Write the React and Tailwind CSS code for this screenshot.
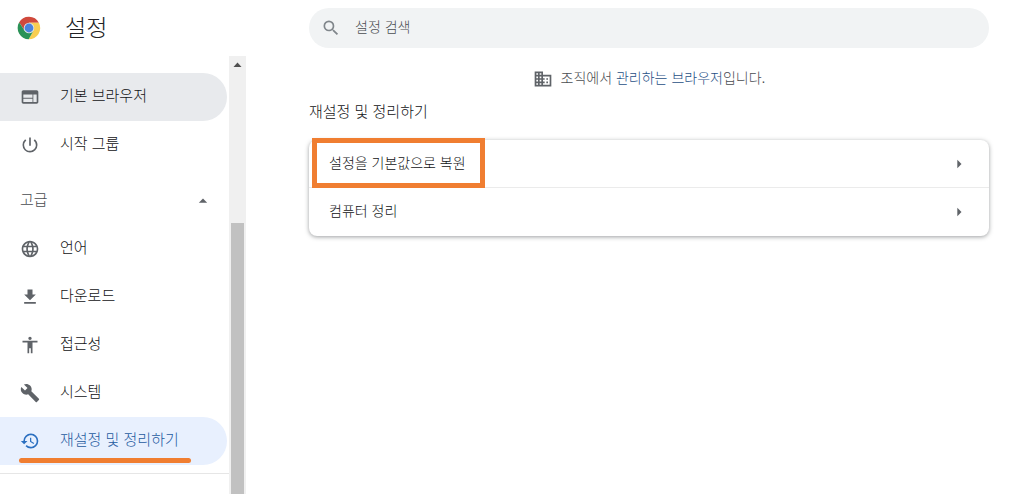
import React from "react";
import {
  MdWeb,
  MdPowerSettingsNew,
  MdLanguage,
  MdGetApp,
  MdAccessibility,
  MdBuild,
  MdRestore,
  MdSearch,
  MdDomain,
  MdArrowRight,
  MdArrowDropUp,
} from "react-icons/md";

const basicItems = [
  { label: "기본 브라우저", icon: MdWeb, state: "hover" },
  { label: "시작 그룹", icon: MdPowerSettingsNew },
];

const advancedItems = [
  { label: "언어", icon: MdLanguage },
  { label: "다운로드", icon: MdGetApp },
  { label: "접근성", icon: MdAccessibility },
  { label: "시스템", icon: MdBuild },
  { label: "재설정 및 정리하기", icon: MdRestore, state: "selected" },
];

const stateStyles = {
  hover: "bg-[#e8eaed] text-[#111214]",
  selected: "bg-[#e8f0fe] text-[#1f5a9e]",
  idle: "text-[#111214]",
};

function ChromeLogo() {
  return (
    <svg viewBox="0 0 48 48" className="size-6 shrink-0" aria-hidden="true">
      <path fill="#d0493c" d="M24 24 4.1 12.9A22.5 22.5 0 0 1 43.8 13.5H24Z" />
      <path fill="#d0493c" d="M4.3 12.7 14.9 29.2 24 13.5Z" />
      <path fill="#f8ce52" d="M43.8 13.5A22.5 22.5 0 0 1 23.4 46.5L33.1 29.2 24 13.5Z" />
      <path fill="#2a9257" d="M4.3 12.7A22.5 22.5 0 0 0 23.4 46.5L33.1 29.2 24 33 14.9 29.2Z" />
      <circle cx="24" cy="24" r="10.5" fill="#e3e6e4" />
      <circle cx="24" cy="24" r="8.8" fill="#4a83de" />
    </svg>
  );
}

function NavItem({ label, icon: Icon, state }) {
  return (
    <li>
      <a
        href="#"
        aria-current={state === "selected" ? "page" : undefined}
        className={`relative flex h-12 items-center gap-5 rounded-r-full pl-5 text-[15px] leading-5 ${stateStyles[state || "idle"]}`}
      >
        <Icon className={`size-5 shrink-0 ${state === "selected" ? "text-[#2b6fc0]" : "text-[#5f6368]"}`} />
        <span className="pb-0.5">{label}</span>
        {state === "selected" && (
          <span className="absolute bottom-0.5 left-[19px] h-[5px] w-[172px] rounded-full bg-[#f07e31]" />
        )}
      </a>
    </li>
  );
}

function Sidebar() {
  return (
    <aside className="flex w-[246px] shrink-0 flex-col">
      <header className="flex h-14 shrink-0 items-center gap-6 pl-[17px]">
        <ChromeLogo />
        <h1 className="text-[23px] leading-8 text-[#202124]">설정</h1>
      </header>
      <div className="flex min-h-0 flex-1">
        <nav className="min-w-0 flex-1 overflow-hidden pt-[17px]" aria-label="설정">
          <ul className="pr-0.5">
            {basicItems.map((item) => (
              <NavItem key={item.label} {...item} />
            ))}
          </ul>
          <button
            type="button"
            aria-expanded="true"
            className="mt-2 flex h-12 w-full items-center justify-between pr-4 pl-5 text-[15px] leading-5 text-[#4a4d51]"
          >
            <span className="pb-0.5">고급</span>
            <MdArrowDropUp className="size-5 text-[#5f6368]" />
          </button>
          <ul className="pr-0.5">
            {advancedItems.map((item) => (
              <NavItem key={item.label} {...item} />
            ))}
          </ul>
          <hr className="mt-2 border-[#e6e6e6]" />
        </nav>
        <div className="flex w-[17px] shrink-0 flex-col items-center bg-[#f0f0f0]" aria-hidden="true">
          <svg viewBox="0 0 17 17" className="size-[17px]">
            <path fill="#505050" d="M4.5 11 8.5 6.5 12.5 11Z" />
          </svg>
          <div className="mt-[150px] w-[13px] flex-1 bg-[#c1c1c1]" />
        </div>
      </div>
    </aside>
  );
}

function SettingRow({ label, highlighted }) {
  return (
    <button
      type="button"
      className="relative flex h-12 w-full items-center justify-between px-5 text-left text-sm text-[#111214]"
    >
      <span className="pb-0.5">{label}</span>
      <MdArrowRight className="size-5 text-[#5f6368]" />
      {highlighted && (
        <span className="absolute -top-0.5 left-[3px] h-[50px] w-[173px] border-5 border-[#f07e31]" />
      )}
    </button>
  );
}

export default function App() {
  return (
    <div className="flex h-screen overflow-hidden bg-white font-['Liberation_Sans','Noto_Sans_CJK_KR',sans-serif] font-light">
      <Sidebar />
      <main className="min-w-0 flex-1 pt-2 pr-[26px] pl-[63px]">
        <label className="flex h-10 items-center gap-3.5 rounded-full bg-[#f1f3f4] px-3">
          <MdSearch className="size-5 shrink-0 text-[#80868b]" />
          <input
            type="search"
            aria-label="설정 검색"
            placeholder="설정 검색"
            className="min-w-0 flex-1 bg-transparent pb-0.5 text-sm outline-none placeholder:text-[#4a4d51]"
          />
        </label>
        <div className="mt-5 flex items-center justify-center gap-2 text-[#4a4d51]">
          <MdDomain className="size-5 text-[#5f6368]" />
          <p className="pb-0.5 text-sm leading-5">
            조직에서{" "}
            <a href="#" className="text-[#1f4f85]">
              관리하는 브라우저
            </a>
            입니다.
          </p>
        </div>
        <h2 className="mt-2.5 text-[15px] leading-6 text-[#111214]">재설정 및 정리하기</h2>
        <section className="mt-4 divide-y divide-[#ebebeb] rounded-lg shadow-[0_1px_4px_rgba(60,64,67,0.5)]">
          <SettingRow label="설정을 기본값으로 복원" highlighted />
          <SettingRow label="컴퓨터 정리" />
        </section>
      </main>
    </div>
  );
}
